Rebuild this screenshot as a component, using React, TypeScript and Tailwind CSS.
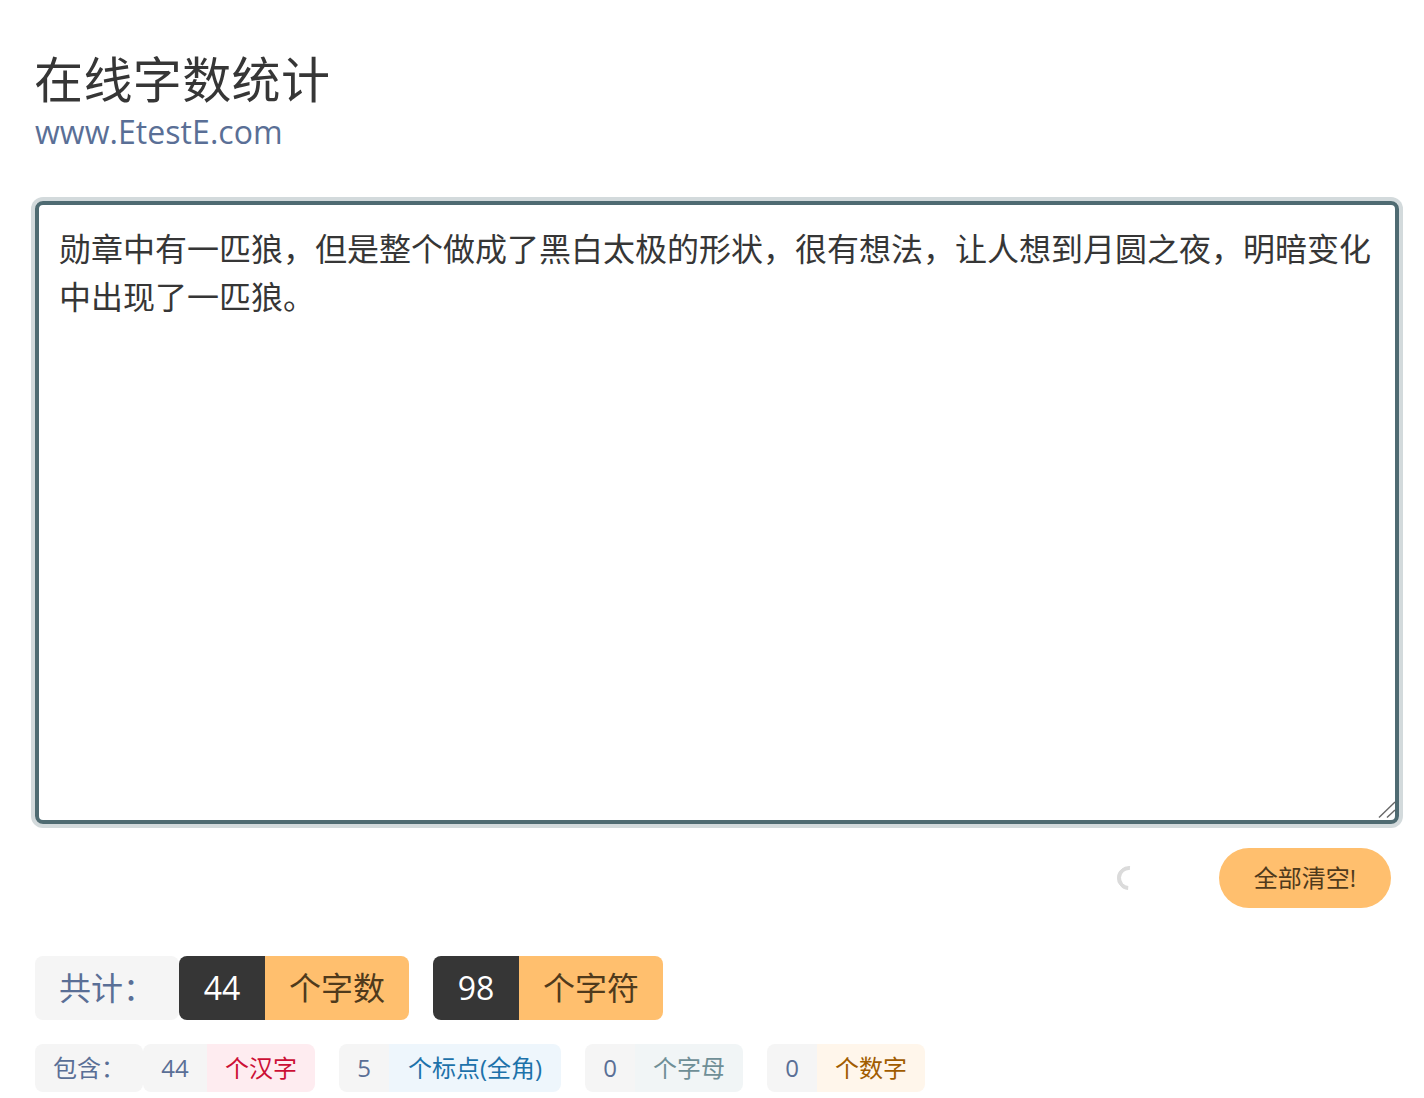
const font = "font-['Segoe_UI','Open_Sans','Noto_Sans_CJK_SC',sans-serif]";

function Tag({ children, cls }: { children: React.ReactNode; cls: string }) {
  return <span className={`inline-flex items-center justify-center shrink-0 ${cls}`}>{children}</span>;
}

export default function App() {
  const big = "h-16 text-[32px] leading-none";
  const small = "h-12 text-2xl leading-none";
  return (
    <div className={`${font} pl-[35px] pt-[49px] w-[1424px] h-[1098px] bg-white text-[#363636] overflow-hidden`}>
      <h1 className="text-[49px] tracking-[0.4px] leading-[60px] h-[60px] font-normal text-[#363636] -ml-px">在线字数统计</h1>
      <p className="text-[32px] leading-10 h-10 mt-[3px] mb-px text-[#5a6f96] tracking-[0.05px]">www.EtestE.com</p>
      <div className="relative mt-[49px] w-[1364px] h-[623px]">
        <textarea
          readOnly
          className="block w-full h-full resize-none border-4 border-[#4f6b72] ring-4 ring-[#4f6b72]/25 rounded-lg outline-none px-5 py-5 text-[32px] leading-[48px] text-[#363636]"
          value="勋章中有一匹狼，但是整个做成了黑白太极的形状，很有想法，让人想到月圆之夜，明暗变化中出现了一匹狼。"
        />
        <svg className="absolute right-[3px] bottom-[6px] w-[18px] h-[17px]" viewBox="0 0 18 17" fill="none" stroke="#666" strokeWidth="1.4">
          <path d="M1 16.5 L17 1" />
          <path d="M9 16.5 L17 9" />
        </svg>
      </div>
      <div className="flex items-center justify-end w-[1356px] mt-6 h-[60px]">
        <span className="w-6 h-6 rounded-full border-4 border-[#dbdbdb] border-t-transparent border-r-transparent rotate-[50deg] mr-[78px]" />
        <button className="h-[60px] w-[172px] rounded-full bg-[#ffbf6e] text-2xl text-[#4f3a1c]">全部清空!</button>
      </div>
      <div className="flex mt-12">
        <Tag cls={`${big} w-[144px] bg-[#f5f5f5] text-[#5a6f96] rounded-lg`}>共计：</Tag>
        <Tag cls={`${big} w-[86px] bg-[#363636] text-white rounded-l-lg`}>44</Tag>
        <Tag cls={`${big} w-[144px] bg-[#ffbf6e] text-[#4f3a1c] rounded-r-lg`}>个字数</Tag>
        <Tag cls={`${big} w-[86px] bg-[#363636] text-white rounded-l-lg ml-6`}>98</Tag>
        <Tag cls={`${big} w-[144px] bg-[#ffbf6e] text-[#4f3a1c] rounded-r-lg`}>个字符</Tag>
      </div>
      <div className="flex mt-6">
        <Tag cls={`${small} w-[108px] bg-[#f5f5f5] text-[#5a6f96] rounded-lg`}>包含：</Tag>
        <Tag cls={`${small} w-16 bg-[#f5f5f5] text-[#5a6f96] rounded-l-lg`}>44</Tag>
        <Tag cls={`${small} w-[108px] bg-[#feecf0] text-[#cc0f35] rounded-r-lg`}>个汉字</Tag>
        <Tag cls={`${small} w-[50px] ml-6 bg-[#f5f5f5] text-[#5a6f96] rounded-l-lg`}>5</Tag>
        <Tag cls={`${small} w-[172px] bg-[#eef6fc] text-[#1d72aa] rounded-r-lg`}>个标点(全角)</Tag>
        <Tag cls={`${small} w-[50px] ml-6 bg-[#f5f5f5] text-[#5a6f96] rounded-l-lg`}>0</Tag>
        <Tag cls={`${small} w-[108px] bg-[#f1f5f6] text-[#6f8f96] rounded-r-lg`}>个字母</Tag>
        <Tag cls={`${small} w-[50px] ml-6 bg-[#f5f5f5] text-[#5a6f96] rounded-l-lg`}>0</Tag>
        <Tag cls={`${small} w-[108px] bg-[#fff6eb] text-[#a15c00] rounded-r-lg`}>个数字</Tag>
      </div>
    </div>
  );
}
